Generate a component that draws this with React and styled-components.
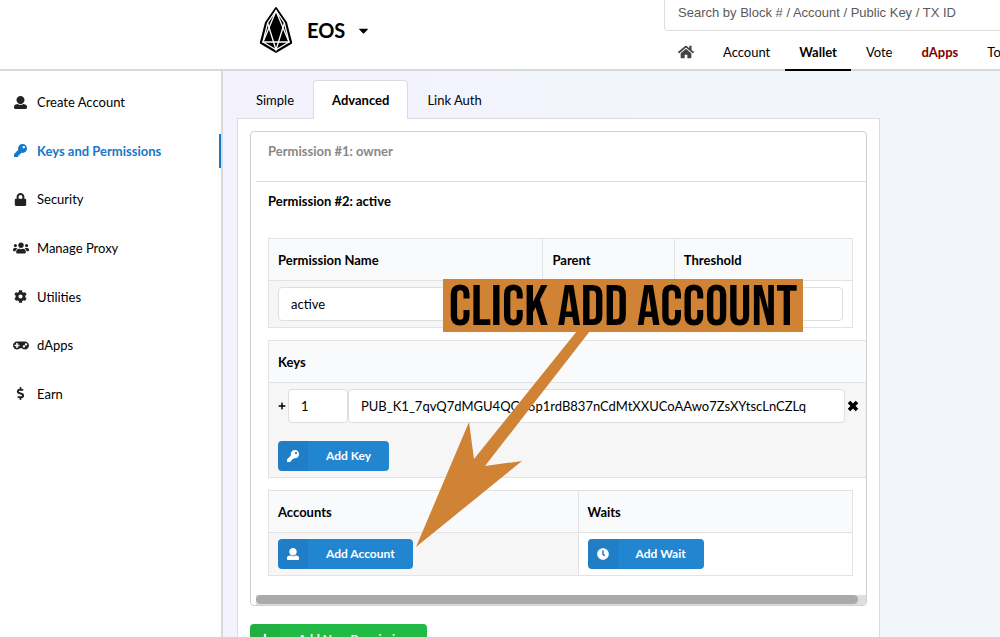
import React from "react";
import styled, { createGlobalStyle } from "styled-components";
import { FaKey, FaLock, FaUsers, FaCog, FaDollarSign, FaHome, FaCaretDown, FaClock, FaPlus } from "react-icons/fa";

const UserIcon = ({ size }) => (
  <svg width={size} height={size} viewBox="0 0 512 512" fill="currentColor" aria-hidden="true">
    <path d="M256 0c88.366 0 160 71.634 160 160s-71.634 160-160 160S96 248.366 96 160 167.634 0 256 0zm183.283 333.821l-71.313-17.828c-74.923 53.89-165.738 41.864-223.94 0l-71.313 17.828C29.981 344.505 0 382.903 0 426.955V464c0 26.51 21.49 48 48 48h416c26.51 0 48-21.49 48-48v-37.045c0-44.052-29.981-82.45-72.717-93.134z" />
  </svg>
);

const GamepadIcon = () => (
  <svg width="16" height="13" viewBox="0 0 640 512" fill="currentColor" aria-hidden="true">
    <path d="M480 96H160C71.6 96 0 167.6 0 256s71.6 160 160 160c44.8 0 85.2-18.4 114.2-48h91.5c29 29.6 69.5 48 114.2 48 88.4 0 160-71.6 160-160S568.4 96 480 96zM256 276c0 6.6-5.4 12-12 12h-52v52c0 6.6-5.4 12-12 12h-40c-6.6 0-12-5.4-12-12v-52H76c-6.6 0-12-5.4-12-12v-40c0-6.6 5.4-12 12-12h52v-52c0-6.6 5.4-12 12-12h40c6.6 0 12 5.4 12 12v52h52c6.6 0 12 5.4 12 12v40zm184 68c-26.5 0-48-21.5-48-48s21.5-48 48-48 48 21.5 48 48-21.5 48-48 48zm80-80c-26.5 0-48-21.5-48-48s21.5-48 48-48 48 21.5 48 48-21.5 48-48 48z" />
  </svg>
);

const CrossIcon = () => (
  <svg width="12" height="12" viewBox="0 0 12 12" aria-hidden="true">
    <path d="M2 2L10 10M10 2L2 10" stroke="#000" strokeWidth="3.6" />
  </svg>
);

const EosLogo = () => (
  <svg width="34" height="48" viewBox="0 0 34 48" aria-hidden="true">
    <path d="M17 2L27 16.5L32.2 36.8L17 46L1.8 36.8L7 16.5Z" fill="#000" stroke="#000" strokeWidth="2" strokeLinejoin="round" />
    <g fill="none" stroke="#fff" strokeWidth="1.3">
      <path d="M17 4.6L25.4 17L30 36L17 43.8L4 36L8.6 17Z" />
      <path d="M17 5L4 36H30Z" />
      <path d="M8.6 17L17 43.8L25.4 17" />
    </g>
  </svg>
);

const sideItems = [
  { label: "Create Account", icon: UserIcon, size: 13 },
  { label: "Keys and Permissions", icon: FaKey, size: 13, active: true },
  { label: "Security", icon: FaLock, size: 13 },
  { label: "Manage Proxy", icon: FaUsers, size: 16 },
  { label: "Utilities", icon: FaCog, size: 13 },
  { label: "dApps", icon: GamepadIcon },
  { label: "Earn", icon: FaDollarSign, size: 13 },
];

const PermissionTable = () => (
  <Table>
    <colgroup>
      <Col $width="47%" />
      <Col $width="22.5%" />
      <Col />
    </colgroup>
    <thead>
      <tr>
        <Th>Permission Name</Th>
        <Th>Parent</Th>
        <Th>Threshold</Th>
      </tr>
    </thead>
    <tbody>
      <tr>
        <Td $shade><Input aria-label="Permission Name" defaultValue="active" /></Td>
        <Td><Input aria-label="Parent" /></Td>
        <Td><Input aria-label="Threshold" /></Td>
      </tr>
    </tbody>
  </Table>
);

const KeysTable = () => (
  <WideTable>
    <thead>
      <tr><Th>Keys</Th></tr>
    </thead>
    <tbody>
      <tr>
        <Td $shade>
          <KeyRow>
            <FaPlus size={8} />
            <WeightInput aria-label="Weight" defaultValue="1" />
            <Input aria-label="Key" defaultValue="PUB_K1_7qvQ7dMGU4QGP6p1rdB837nCdMtXXUCoAAwo7ZsXYtscLnCZLq" />
            <IconButton type="button" aria-label="Remove key"><CrossIcon /></IconButton>
          </KeyRow>
          <LabeledButton icon={<FaKey size={12} />}>Add Key</LabeledButton>
        </Td>
      </tr>
    </tbody>
  </WideTable>
);

const AccountsTable = () => (
  <Table>
    <colgroup>
      <Col $width="53%" />
      <Col />
    </colgroup>
    <thead>
      <tr>
        <Th>Accounts</Th>
        <Th>Waits</Th>
      </tr>
    </thead>
    <tbody>
      <tr>
        <Td $shade><LabeledButton icon={<UserIcon size={12} />}>Add Account</LabeledButton></Td>
        <Td><LabeledButton icon={<FaClock size={12} />}>Add Wait</LabeledButton></Td>
      </tr>
    </tbody>
  </Table>
);

const LabeledButton = ({ icon, green, children }) => (
  <Button type="button" $green={green}>
    <ButtonIcon>{icon}</ButtonIcon>
    <ButtonLabel>{children}</ButtonLabel>
  </Button>
);

const App = () => (
  <Page>
    <Global />
    <Header>
      <Brand>
        <EosLogo />
        <BrandButton type="button">EOS <FaCaretDown size={15} /></BrandButton>
      </Brand>
      <HeaderRight>
        <Search aria-label="Search" placeholder="Search by Block # / Account / Public Key / TX ID" />
        <Nav>
          <NavLink href="#home" aria-label="Home"><FaHome size={16} color="#444" /></NavLink>
          <NavLink href="#account">Account</NavLink>
          <NavLink href="#wallet" $active>Wallet</NavLink>
          <NavLink href="#vote">Vote</NavLink>
          <NavLink href="#dapps" $red>dApps</NavLink>
          <NavLink href="#tools">Tools</NavLink>
        </Nav>
      </HeaderRight>
    </Header>
    <Body>
      <Sidebar>
        <SideList>
          {sideItems.map(({ label, icon: Icon, size, active }) => (
            <SideLink key={label} href="#side" $active={active}>
              <SideIcon $active={active}><Icon size={size} /></SideIcon>
              {label}
            </SideLink>
          ))}
        </SideList>
      </Sidebar>
      <Main>
        <Tabs role="tablist">
          <Tab type="button" role="tab">Simple</Tab>
          <Tab type="button" role="tab" aria-selected="true" $active>Advanced</Tab>
          <Tab type="button" role="tab">Link Auth</Tab>
        </Tabs>
        <Panel>
          <Segment>
            <PermissionTitle $muted>Permission #1: owner</PermissionTitle>
            <Divider />
            <PermissionTitle>Permission #2: active</PermissionTitle>
            <Tables>
              <PermissionTable />
              <KeysTable />
              <AccountsTable />
            </Tables>
            <ScrollTrack><ScrollThumb /></ScrollTrack>
          </Segment>
          <LabeledButton green icon={<FaPlus size={12} />}>Add New Permission</LabeledButton>
        </Panel>
        <Arrow width="112" height="220" viewBox="0 0 112 220" aria-hidden="true">
          <path d="M0 216L53 91L58 128L161 0L174 0L69 135L106 130Z" fill="#d08335" />
        </Arrow>
        <Callout>CLICK ADD ACCOUNT</Callout>
      </Main>
    </Body>
  </Page>
);

const Global = createGlobalStyle`
  * {
    box-sizing: border-box;
  }
  body {
    margin: 0;
    overflow: hidden;
    font-family: Lato, "Liberation Sans", sans-serif;
    font-size: 13px;
    color: #000;
  }
  button, input {
    font: inherit;
    color: inherit;
  }
`;

const Page = styled.div`
  height: 100vh;
  display: flex;
  flex-direction: column;
  overflow: hidden;
`;

const Header = styled.header`
  display: flex;
  flex: none;
  height: 71px;
  border-bottom: 2px solid #d9d9da;
  background: #fff;
`;

const Brand = styled.div`
  display: flex;
  flex: 1;
  align-items: flex-start;
  gap: 14px;
  padding: 6px 0 0 259px;
`;

const BrandButton = styled.button`
  display: flex;
  align-items: center;
  gap: 11px;
  height: 48px;
  padding: 0;
  border: 0;
  background: none;
  font-size: 20px;
  font-weight: 700;
`;

const HeaderRight = styled.div`
  display: flex;
  flex-direction: column;
  width: 336px;
`;

const Search = styled.input`
  flex: none;
  width: 480px;
  height: 31px;
  padding: 0 13px 6px;
  border: 1px solid #dededf;
  border-top: 0;
  border-radius: 0 0 4px 4px;
  font-family: "Liberation Sans", Arial, sans-serif;

  &::placeholder {
    color: #5a5a5a;
  }
`;

const Nav = styled.nav`
  display: flex;
  flex: none;
  gap: 1px;
  height: 40px;
`;

const NavLink = styled.a`
  display: flex;
  flex: none;
  align-items: center;
  padding: 4px 14px 0;
  border-bottom: 2px solid ${(props) => (props.$active ? "#000" : "transparent")};
  color: ${(props) => (props.$red ? "#800000" : "#000")};
  font-weight: ${(props) => (props.$active || props.$red ? 700 : 400)};
  text-decoration: none;
`;

const Body = styled.div`
  display: flex;
  flex: 1;
  min-height: 0;
`;

const Sidebar = styled.nav`
  flex: none;
  width: 223px;
  padding-top: 14px;
  border-right: 2px solid #d9d9da;
  background: #fff;
`;

const SideList = styled.div`
  display: flex;
  flex-direction: column;
  justify-content: space-between;
  height: 326px;
`;

const SideLink = styled.a`
  display: flex;
  align-items: center;
  gap: 8px;
  height: 34px;
  padding-left: 12px;
  border-right: 2px solid ${(props) => (props.$active ? "#1678c8" : "transparent")};
  color: ${(props) => (props.$active ? "#1678c8" : "#000")};
  font-weight: ${(props) => (props.$active ? 700 : 400)};
  text-decoration: none;
`;

const SideIcon = styled.span`
  display: flex;
  justify-content: center;
  width: 17px;
  color: ${(props) => (props.$active ? "#1678c8" : "#222")};
`;

const Main = styled.main`
  position: relative;
  flex: 1;
  min-width: 0;
  padding: 9px 120px 0 14px;
  background: linear-gradient(90deg, #f3f2fd, #f2f6fb 80%);
`;

const Tabs = styled.div`
  display: flex;
  margin-bottom: -1px;
`;

const Tab = styled.button`
  height: 39px;
  padding: 0 18px;
  border: 1px solid ${(props) => (props.$active ? "#dcdcdf" : "transparent")};
  border-bottom: 0;
  border-radius: 4px 4px 0 0;
  background: ${(props) => (props.$active ? "#fff" : "transparent")};
  font-weight: ${(props) => (props.$active ? 700 : 400)};
`;

const Panel = styled.section`
  min-height: 600px;
  padding: 12px;
  border: 1px solid #dcdcdf;
  background: #fff;
`;

const Segment = styled.div`
  margin-bottom: 18px;
  padding-left: 5px;
  border: 1px solid #cfcfd0;
  border-radius: 4px;
  overflow: hidden;
`;

const PermissionTitle = styled.h2`
  margin: 0;
  padding: 11px 12px 13px;
  font-size: 13px;
  line-height: 16px;
  color: ${(props) => (props.$muted ? "#888" : "#000")};
`;

const Divider = styled.div`
  height: 1px;
  margin-top: 9px;
  background: #dededf;
`;

const Tables = styled.div`
  display: flex;
  flex-direction: column;
  gap: 12px;
  padding: 16px 13px 19px 12px;
`;

const Table = styled.table`
  width: 100%;
  border: 1px solid #e2e3e4;
  border-collapse: collapse;
  table-layout: fixed;
`;

const WideTable = styled(Table)`
  width: calc(100% + 16px);
`;

const Col = styled.col`
  width: ${(props) => props.$width || "auto"};
`;

const Th = styled.th`
  height: 42px;
  padding: 0 9px;
  border: 1px solid #e2e3e4;
  background: #f9fafb;
  text-align: left;
`;

const Td = styled.td`
  padding: 6px 9px;
  border: ${(props) => (props.$shade ? "0" : "1px solid #e2e3e4")};
  background: ${(props) => (props.$shade ? "#f6f6f6" : "#fff")};
`;

const Input = styled.input`
  display: block;
  width: 100%;
  height: 34px;
  padding: 0 12px;
  border: 1px solid #dededf;
  border-radius: 4px;
  background: #fff;
`;

const WeightInput = styled(Input)`
  flex: none;
  width: 60px;
  margin-left: 2px;
`;

const KeyRow = styled.div`
  display: flex;
  align-items: center;
  margin-bottom: 18px;

  > svg {
    flex: none;
  }
`;

const IconButton = styled.button`
  display: flex;
  margin-left: 2px;
  padding: 0;
  border: 0;
  background: none;
`;

const Button = styled.button`
  display: flex;
  height: 30px;
  padding: 0;
  border: 0;
  border-radius: 4px;
  background: ${(props) => (props.$green ? "#21ba45" : "#2185d0")};
  color: #fff;
  font-size: 12px;
  font-weight: 700;
  overflow: hidden;
`;

const ButtonIcon = styled.span`
  display: flex;
  align-items: center;
  justify-content: center;
  width: 30px;
  height: 30px;
  background: rgba(0, 0, 0, 0.05);
`;

const ButtonLabel = styled.span`
  padding: 0 18px;
  line-height: 30px;
`;

const ScrollTrack = styled.div`
  height: 10px;
  background: #dedede;
`;

const ScrollThumb = styled.div`
  width: calc(100% - 8px);
  height: 9px;
  border-radius: 5px;
  background: #aaa;
`;

const Callout = styled.div`
  position: absolute;
  top: 208px;
  left: 220px;
  width: 360px;
  height: 53px;
  background: #d08335;
  font-family: "Bebas Neue", "Liberation Sans Narrow", "Roboto Condensed", sans-serif;
  font-size: 58px;
  font-weight: 400;
  line-height: 58px;
  text-align: center;
  white-space: nowrap;
`;

const Arrow = styled.svg`
  position: absolute;
  top: 260px;
  left: 193px;
  overflow: visible;
`;

export default App;
